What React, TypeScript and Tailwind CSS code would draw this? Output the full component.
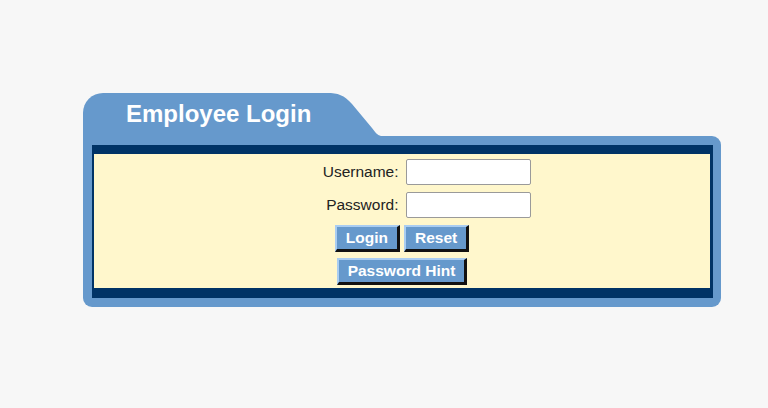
import React from 'react';

const font = { fontFamily: '"Liberation Sans", Arial, sans-serif' };

const FormButton: React.FC<{ label: string }> = ({ label }) => (
    <button
        type="button"
        className="h-[27px] px-[9px] bg-[#6699cc] text-white font-bold text-[15.5px] leading-none border-t-2 border-l-2 border-b-[3px] border-r-[3px] border-t-[#a9cdf2] border-l-[#a9cdf2] border-b-[#111] border-r-[#111]"
    >
        {label}
    </button>
);

const Field: React.FC<{ label: string; type?: string }> = ({ label, type = 'text' }) => (
    <>
        <label className="text-right text-[15.5px] text-[#222] self-center">{label}</label>
        <input
            type={type}
            className="w-[125px] h-[26px] bg-white border border-[#9a9a9a] rounded-[2px] px-1 text-sm outline-none"
        />
    </>
);

const App: React.FC = () => {
    return (
        <div className="min-h-[408px] w-full bg-[#f7f7f7] pt-[93px] pl-[83px]" style={font}>
            <div className="w-[638px]">
                {/* folder tab */}
                <div className="flex h-[43px]">
                    <div className="w-[244px] h-full bg-[#6699cc] rounded-tl-[20px] pt-[7px] pl-[43px]">
                        <h1 className="text-white font-bold text-[24px] leading-[28px] whitespace-nowrap">Employee Login</h1>
                    </div>
                    <svg width="54" height="43" viewBox="0 0 54 43" className="block">
                        <path d="M0 0 C11 0 17 2 25 11 L45 35 C48 39 50 42 54 43 L0 43 Z" fill="#6699cc" />
                    </svg>
                </div>

                {/* folder body */}
                <div className="bg-[#6699cc] rounded-tr-[9px] rounded-b-[9px] pt-[9px] pl-[9px] pr-[8px] pb-[9px]">
                    <div className="bg-[#003366] border-t-[9px] border-b-[10px] border-l-2 border-r-[3px] border-[#003366]">
                        <div className="bg-[#fff7cc] h-[134px] pt-[5px] flex flex-col items-center">
                            <div className="grid grid-cols-2 gap-x-[7px] gap-y-[7px] w-full">
                                <Field label="Username:" />
                                <Field label="Password:" type="password" />
                            </div>
                            <div className="flex gap-[4px] mt-[7px]">
                                <FormButton label="Login" />
                                <FormButton label="Reset" />
                            </div>
                            <div className="mt-[6px]">
                                <FormButton label="Password Hint" />
                            </div>
                        </div>
                    </div>
                </div>
            </div>
        </div>
    );
};

export default App;
